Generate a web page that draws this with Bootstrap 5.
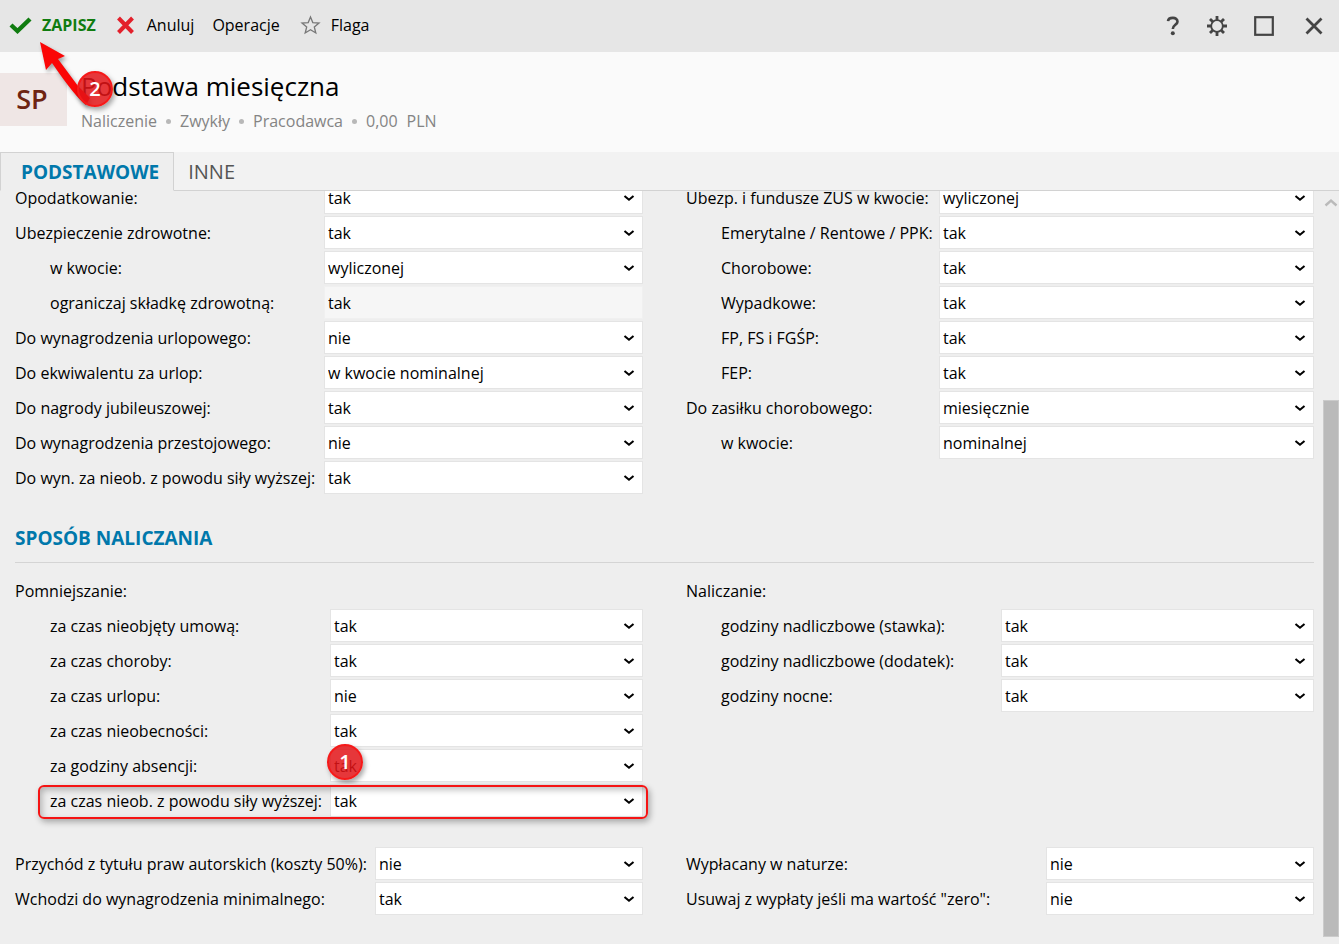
<!DOCTYPE html>
<html lang="pl">
<head>
<meta charset="utf-8">
<meta name="viewport" content="width=device-width, initial-scale=1">
<title>Podstawa miesięczna</title>
<link href="https://cdn.jsdelivr.net/npm/bootstrap@5.3.0/dist/css/bootstrap.min.css" rel="stylesheet">
<style>
  body { font-family: "Open Sans", "Noto Sans", sans-serif; font-size: 16px; line-height: 24px; color: #000; background: #eee; }
  .toolbar { height: 52px; background: #e6e6e6; padding: 0 16px 2px 9px; }
  .tool { border: 0; background: none; padding: 0; color: #000; display: inline-flex; align-items: center; }
  .tool-save { color: #107c10; font-weight: 700; gap: 10px; margin-right: 20px; }
  .tool-cancel { gap: 12px; margin-right: 18px; }
  .tool-flag { gap: 10px; margin-left: 20px; }
  .window-tools { gap: 27px; }
  .record { height: 100px; background: #fafafa; gap: 14px; }
  .initials { width: 67px; height: 53px; margin-top: 21px; background: #efe6e5; color: #6e2412; font-size: 27px; font-weight: 600; padding: 0 3px 2px 0; }
  .record h1 { font-size: 26px; line-height: 36px; margin: 16px 0 5px; font-weight: 400; }
  .facts { font-size: 16px; color: #848484; gap: 9px; }
  .facts .sep { width: 5px; height: 5px; border-radius: 50%; background: #b8b8b8; }
  .tabs-bar { height: 39px; background: #f2f2f2; }
  .tabs-bar .nav-link { font-size: 20px; line-height: 24px; color: #555; border: 0; border-bottom: 1px solid #d2d2d2; border-radius: 0; padding: 8px 14px 6px; }
  .tabs-bar .nav-link.active { color: #0078ab; font-size: 19px; font-weight: 700; background: #eee; border: 1px solid #d2d2d2; border-bottom-color: #eee; padding: 7px 14px 6px 20px; }
  .tabs-fill { border-bottom: 1px solid #d2d2d2; }
  .form-view { padding: 0 9px 0 15px; }
  .scrolled { margin-top: -9px; }
  .pair { display: grid; grid-template-columns: 1fr 1fr; column-gap: 43px; }
  .field { display: grid; grid-template-columns: var(--label) 1fr; align-items: center; height: 32px; margin-bottom: 3px; position: relative; white-space: nowrap; }
  .sub label { padding-left: 35px; }
  .w-253 { --label: 253px; } .w-309 { --label: 309px; } .w-315 { --label: 315px; } .w-360 { --label: 360px; }
  .field .form-select, .field .form-control { height: 33px; margin-top: -2px; border: 1px solid #e4e4e4; border-radius: 0; padding: 2px 24px 0 3px; font-size: 16px; line-height: 24px; color: #000; background-color: #fff; }
  .field .form-select { background-image: url("data:image/svg+xml,%3Csvg xmlns='http://www.w3.org/2000/svg' viewBox='0 0 12 8'%3E%3Cpath d='M1.5 2L6 5.7L10.5 2' fill='none' stroke='%23000' stroke-width='2.1'/%3E%3C/svg%3E"); background-size: 12px 8px; background-position: right 7px top 12px; }
  .field .form-control:disabled { background: #f6f6f6; border-color: #f0f0f0; opacity: 1; }
  .section-title { color: #0078ab; font-size: 19px; line-height: 24px; font-weight: 700; margin: 29px 0 12px; }
  .rule { border-top: 1px solid #d4d4d4; margin-bottom: 12px; }
  .last-group { margin-top: 28px; }
  .scrollbar-track { width: 16px; padding-top: 6px; }
  .thumb { background: #bababa; border: 1px solid #cbcbcb; flex: 1; margin: 191px 0 7px; }
  .step { position: absolute; width: 36px; height: 36px; border-radius: 50%; background: rgba(226,20,24,.85); border: 2px solid #f51a1a; color: #fff; font-size: 20px; line-height: 31px; font-weight: 600; text-align: center; box-shadow: 2px 3px 5px rgba(0,0,0,.35); }
  .step-1 { left: 312px; top: -6px; }
  .step-2 { left: 77px; top: 71px; }
  .arrow-mark { position: absolute; left: 30px; top: 36px; filter: drop-shadow(2px 3px 2px rgba(0,0,0,.35)); }
  .outline-mark { position: absolute; inset: 0 -5px -2px 23px; border: 2px solid #f51414; border-radius: 6px; box-shadow: 2px 3px 6px rgba(0,0,0,.3), inset 2px 3px 6px rgba(0,0,0,.25); pointer-events: none; }
</style>
</head>
<body>
<div class="vh-100 d-flex flex-column overflow-hidden position-relative">
  <header class="toolbar d-flex align-items-center flex-shrink-0">
    <button class="tool tool-save" type="button">
      <svg width="23" height="18" viewBox="0 0 23 18"><path d="M2 9L8.5 15L21 3" fill="none" stroke="#107c10" stroke-width="4.4"/></svg>ZAPISZ</button>
    <button class="tool tool-cancel" type="button">
      <svg width="19" height="18" viewBox="0 0 19 18"><path d="M2.5 2L16.5 16.5M16.5 2L2.5 16.5" fill="none" stroke="#e3202b" stroke-width="4"/></svg>Anuluj</button>
    <button class="tool" type="button">Operacje</button>
    <button class="tool tool-flag" type="button">
      <svg width="21" height="20" viewBox="0 0 21 20"><path d="M10.5 2L12.8 7.6L19 8L14.3 12L15.8 18L10.5 14.8L5.2 18L6.7 12L2 8L8.2 7.6Z" fill="none" stroke="#777" stroke-width="1.3"/></svg>Flaga</button>
    <div class="window-tools d-flex align-items-center ms-auto pt-1">
      <button class="tool" type="button" aria-label="Pomoc"><svg width="14" height="22" viewBox="0 0 14 22"><path d="M2 5.2C2.5 .8 11.6 .7 11.5 5.6C11.5 8.8 6.8 9 6.8 13" fill="none" stroke="#444" stroke-width="2.6"/><circle cx="6.8" cy="17.3" r="2" fill="#444"/></svg></button>
      <button class="tool" type="button" aria-label="Ustawienia"><svg width="20" height="22" viewBox="0 0 20 22"><circle cx="10" cy="10" r="5.8" fill="none" stroke="#444" stroke-width="1.8"/><path d="M10 0V4M10 16V20M0 10H4M16 10H20M3 3L5.8 5.8M14.2 14.2L17 17M17 3L14.2 5.8M3 17L5.8 14.2" stroke="#444" stroke-width="2.8"/></svg></button>
      <button class="tool" type="button" aria-label="Maksymalizuj"><svg width="20" height="22" viewBox="0 0 20 22"><rect x="1.2" y="1.2" width="17.6" height="17.6" fill="none" stroke="#444" stroke-width="2.2"/></svg></button>
      <button class="tool ms-1" type="button" aria-label="Zamknij"><svg width="18" height="20" viewBox="0 0 18 20"><path d="M1.5 1.5L16.5 16.5M16.5 1.5L1.5 16.5" stroke="#444" stroke-width="2.8"/></svg></button>
    </div>
  </header>

  <section class="record d-flex flex-shrink-0">
    <div class="initials d-flex align-items-center justify-content-center">SP</div>
    <div>
      <h1>Podstawa miesięczna</h1>
      <div class="facts d-flex align-items-center">
        <span>Naliczenie</span><span class="sep"></span><span>Zwykły</span><span class="sep"></span><span>Pracodawca</span><span class="sep"></span><span>0,00</span><span>PLN</span>
      </div>
    </div>
  </section>

  <nav class="tabs-bar d-flex flex-shrink-0">
    <a class="nav-link active" href="#podstawowe">PODSTAWOWE</a>
    <a class="nav-link" href="#inne">INNE</a>
    <div class="tabs-fill flex-grow-1"></div>
  </nav>

  <main class="d-flex flex-grow-1 overflow-hidden" id="podstawowe">
    <form class="form-view flex-grow-1">
      <div class="scrolled">
      <div class="pair">
        <div class="w-309">
          <div class="field"><label for="a1">Opodatkowanie:</label><select class="form-select" id="a1"><option>tak</option></select></div>
          <div class="field"><label for="a2">Ubezpieczenie zdrowotne:</label><select class="form-select" id="a2"><option>tak</option></select></div>
          <div class="field sub"><label for="a3">w kwocie:</label><select class="form-select" id="a3"><option>wyliczonej</option></select></div>
          <div class="field sub"><label for="a4">ograniczaj składkę zdrowotną:</label><input class="form-control" id="a4" value="tak" disabled></div>
          <div class="field"><label for="a5">Do wynagrodzenia urlopowego:</label><select class="form-select" id="a5"><option>nie</option></select></div>
          <div class="field"><label for="a6">Do ekwiwalentu za urlop:</label><select class="form-select" id="a6"><option>w kwocie nominalnej</option></select></div>
          <div class="field"><label for="a7">Do nagrody jubileuszowej:</label><select class="form-select" id="a7"><option>tak</option></select></div>
          <div class="field"><label for="a8">Do wynagrodzenia przestojowego:</label><select class="form-select" id="a8"><option>nie</option></select></div>
          <div class="field"><label for="a9">Do wyn. za nieob. z powodu siły wyższej:</label><select class="form-select" id="a9"><option>tak</option></select></div>
        </div>
        <div class="w-253">
          <div class="field"><label for="b1">Ubezp. i fundusze ZUS w kwocie:</label><select class="form-select" id="b1"><option>wyliczonej</option></select></div>
          <div class="field sub"><label for="b2">Emerytalne / Rentowe / PPK:</label><select class="form-select" id="b2"><option>tak</option></select></div>
          <div class="field sub"><label for="b3">Chorobowe:</label><select class="form-select" id="b3"><option>tak</option></select></div>
          <div class="field sub"><label for="b4">Wypadkowe:</label><select class="form-select" id="b4"><option>tak</option></select></div>
          <div class="field sub"><label for="b5">FP, FS i FGŚP:</label><select class="form-select" id="b5"><option>tak</option></select></div>
          <div class="field sub"><label for="b6">FEP:</label><select class="form-select" id="b6"><option>tak</option></select></div>
          <div class="field"><label for="b7">Do zasiłku chorobowego:</label><select class="form-select" id="b7"><option>miesięcznie</option></select></div>
          <div class="field sub"><label for="b8">w kwocie:</label><select class="form-select" id="b8"><option>nominalnej</option></select></div>
        </div>
      </div>

      <h2 class="section-title">SPOSÓB NALICZANIA</h2>
      <div class="rule"></div>

      <div class="pair">
        <div class="w-315">
          <div class="field">Pomniejszanie:</div>
          <div class="field sub"><label for="c1">za czas nieobjęty umową:</label><select class="form-select" id="c1"><option>tak</option></select></div>
          <div class="field sub"><label for="c2">za czas choroby:</label><select class="form-select" id="c2"><option>tak</option></select></div>
          <div class="field sub"><label for="c3">za czas urlopu:</label><select class="form-select" id="c3"><option>nie</option></select></div>
          <div class="field sub"><label for="c4">za czas nieobecności:</label><select class="form-select" id="c4"><option>tak</option></select></div>
          <div class="field sub"><label for="c5">za godziny absencji:</label><select class="form-select" id="c5"><option>tak</option></select><span class="step step-1">1</span></div>
          <div class="field sub"><label for="c6">za czas nieob. z powodu siły wyższej:</label><select class="form-select" id="c6"><option>tak</option></select><span class="outline-mark"></span></div>
        </div>
        <div class="w-315">
          <div class="field">Naliczanie:</div>
          <div class="field sub"><label for="d1">godziny nadliczbowe (stawka):</label><select class="form-select" id="d1"><option>tak</option></select></div>
          <div class="field sub"><label for="d2">godziny nadliczbowe (dodatek):</label><select class="form-select" id="d2"><option>tak</option></select></div>
          <div class="field sub"><label for="d3">godziny nocne:</label><select class="form-select" id="d3"><option>tak</option></select></div>
        </div>
      </div>

      <div class="pair last-group">
        <div class="w-360">
          <div class="field"><label for="e1">Przychód z tytułu praw autorskich (koszty 50%):</label><select class="form-select" id="e1"><option>nie</option></select></div>
          <div class="field"><label for="e2">Wchodzi do wynagrodzenia minimalnego:</label><select class="form-select" id="e2"><option>tak</option></select></div>
        </div>
        <div class="w-360">
          <div class="field"><label for="f1">Wypłacany w naturze:</label><select class="form-select" id="f1"><option>nie</option></select></div>
          <div class="field"><label for="f2">Usuwaj z wypłaty jeśli ma wartość "zero":</label><select class="form-select" id="f2"><option>nie</option></select></div>
        </div>
      </div>
      </div>
    </form>
    <div class="scrollbar-track d-flex flex-column flex-shrink-0">
      <svg width="16" height="12" viewBox="0 0 16 12"><path d="M2.5 8.5L8 3.5L13.5 8.5" fill="none" stroke="#bababa" stroke-width="2.4"/></svg>
      <div class="thumb"></div>
    </div>
  </main>

  <svg class="arrow-mark" width="64" height="76" viewBox="30 36 64 76"><path d="M40 42L65 56L58 59L78 86L90 98L86 105Q76 98 52 63L46 70Z" fill="#fb0606"/></svg>
  <span class="step step-2">2</span>
</div>
<script src="https://cdn.jsdelivr.net/npm/bootstrap@5.3.0/dist/js/bootstrap.bundle.min.js"></script>
</body>
</html>
